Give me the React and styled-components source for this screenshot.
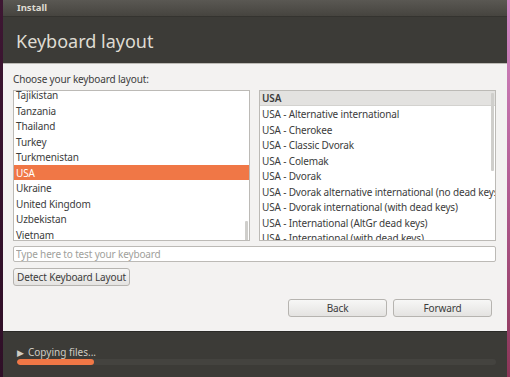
import styled, { createGlobalStyle } from 'styled-components'

const GlobalStyle = createGlobalStyle`
  html, body {
    margin: 0;
    padding: 0;
    background: #3a1530;
  }
  body {
    font-family: "Noto Sans", "Open Sans", sans-serif;
  }
`

const countries = [
  'Tajikistan', 'Tanzania', 'Thailand', 'Turkey', 'Turkmenistan',
  'USA', 'Ukraine', 'United Kingdom', 'Uzbekistan', 'Vietnam'
]

const variants = [
  'USA - Alternative international',
  'USA - Cherokee',
  'USA - Classic Dvorak',
  'USA - Colemak',
  'USA - Dvorak',
  'USA - Dvorak alternative international (no dead keys)',
  'USA - Dvorak international (with dead keys)',
  'USA - International (AltGr dead keys)',
  'USA - International (with dead keys)'
]

function App () {
  return (
    <>
      <GlobalStyle />
      <Desktop>
        <LeftEdge />
        <Window>
          <TitleBar>Install</TitleBar>
          <Header>Keyboard layout</Header>
          <Content>
            <Label>Choose your keyboard layout:</Label>
            <Lists>
              <ListBox>
                <Rows offset={4}>
                  {countries.map((name) => (
                    <Row key={name} selected={name === 'USA'}>{name}</Row>
                  ))}
                </Rows>
                <Scrollbar top={130} height={21} />
              </ListBox>
              <ListBox>
                <Rows offset={0}>
                  <HeadRow>USA</HeadRow>
                  {variants.map((name) => (
                    <Row key={name}>{name}</Row>
                  ))}
                </Rows>
                <Scrollbar top={2} height={78} />
              </ListBox>
            </Lists>
            <TestInput placeholder="Type here to test your keyboard" />
            <DetectRow>
              <Button>Detect Keyboard Layout</Button>
            </DetectRow>
            <NavRow>
              <NavButton>Back</NavButton>
              <NavButton>Forward</NavButton>
            </NavRow>
          </Content>
          <Footer>
            <Status>
              <Arrow>▶</Arrow>
              Copying files...
            </Status>
            <Progress>
              <ProgressFill style={{ width: '16%' }} />
            </Progress>
          </Footer>
        </Window>
        <RightEdge />
      </Desktop>
    </>
  )
}

export default App

const Desktop = styled.div`
  display: flex;
  width: 510px;
  height: 377px;
  overflow: hidden;
`
const LeftEdge = styled.div`
  width: 3px;
  background: linear-gradient(#3d1632, #2f0f27);
`
const RightEdge = styled.div`
  width: 3px;
  background: linear-gradient(#d88ac8, #b25c92 50%, #8c3557);
`
const Window = styled.div`
  flex: 1;
  display: flex;
  flex-direction: column;
  background: #3c3b37;
`
const TitleBar = styled.div`
  height: 17px;
  box-sizing: border-box;
  padding: 1px 14px 0;
  font-size: 9.5px;
  font-weight: 700;
  color: #dfdbd2;
  background: linear-gradient(#5a5853, #46443f);
  border-bottom: 1px solid #34332f;
`
const Header = styled.div`
  height: 47px;
  box-sizing: border-box;
  padding: 12px 13px 0;
  font-size: 18px;
  color: #dfdbd2;
  border-bottom: 1px solid #bdbbb6;
`
const Content = styled.div`
  height: 267px;
  box-sizing: border-box;
  background: #f3f2f1;
  padding: 8px 11px 0 10px;
  display: flex;
  flex-direction: column;
  color: #3c3c3c;
  font-size: 10px;
  letter-spacing: -0.15px;
`
const Label = styled.div`
  height: 18px;
  line-height: 15px;
`
const Lists = styled.div`
  display: grid;
  grid-template-columns: 237px 1fr;
  gap: 9px;
`
const ListBox = styled.div`
  position: relative;
  height: 151px;
  box-sizing: border-box;
  background: #ffffff;
  border: 1px solid #bcbab6;
  overflow: hidden;
`
const Rows = styled.div`
  margin-top: ${({ offset }) => -offset}px;
`
const Row = styled.div`
  height: 15.5px;
  line-height: 16px;
  padding-left: 2px;
  white-space: nowrap;
  background: ${({ selected }) => selected ? '#f07746' : 'transparent'};
  color: ${({ selected }) => selected ? '#ffffff' : '#3c3c3c'};
`
const HeadRow = styled(Row)`
  height: 14px;
  line-height: 15px;
  background: #e3e2e0;
  border-bottom: 1px solid #d3d2cf;
  font-weight: 600;
`
const Scrollbar = styled.div`
  position: absolute;
  right: 1px;
  top: ${({ top }) => top}px;
  width: 3px;
  height: ${({ height }) => height}px;
  background: #cfcecb;
  border-radius: 1px;
`
const TestInput = styled.input`
  margin-top: 5px;
  height: 16px;
  box-sizing: border-box;
  border: 1px solid #bcbab6;
  border-radius: 2px;
  background: #ffffff;
  padding: 0 2px;
  font-family: inherit;
  font-size: 10px;
  letter-spacing: -0.15px;
  color: #3c3c3c;
  outline: none;
  &::placeholder {
    color: #a09f9c;
  }
`
const DetectRow = styled.div`
  display: flex;
  margin-top: 6px;
`
const Button = styled.button`
  height: 18px;
  box-sizing: border-box;
  padding: 0 3px;
  border: 1px solid #b6b4b0;
  border-radius: 3px;
  background: linear-gradient(#f7f7f6, #e4e3e1);
  font-family: inherit;
  font-size: 10px;
  letter-spacing: -0.15px;
  color: #3c3c3c;
`
const NavRow = styled.div`
  display: flex;
  justify-content: flex-end;
  gap: 6px;
  margin-top: 13px;
  padding-right: 4px;
`
const NavButton = styled(Button)`
  width: 99px;
`
const Footer = styled.div`
  flex: 1;
  box-sizing: border-box;
  border-top: 1px solid #2b2a27;
  padding: 13px 11px 0 14px;
  display: flex;
  flex-direction: column;
`
const Status = styled.div`
  display: flex;
  align-items: center;
  gap: 4px;
  height: 14px;
  font-size: 10px;
  color: #cfcbc3;
`
const Arrow = styled.span`
  font-size: 9px;
  color: #cfcbc3;
`
const Progress = styled.div`
  height: 6px;
  border-radius: 3px;
  background: #44433f;
  overflow: hidden;
`
const ProgressFill = styled.div`
  height: 100%;
  border-radius: 3px;
  background: #f07746;
`
